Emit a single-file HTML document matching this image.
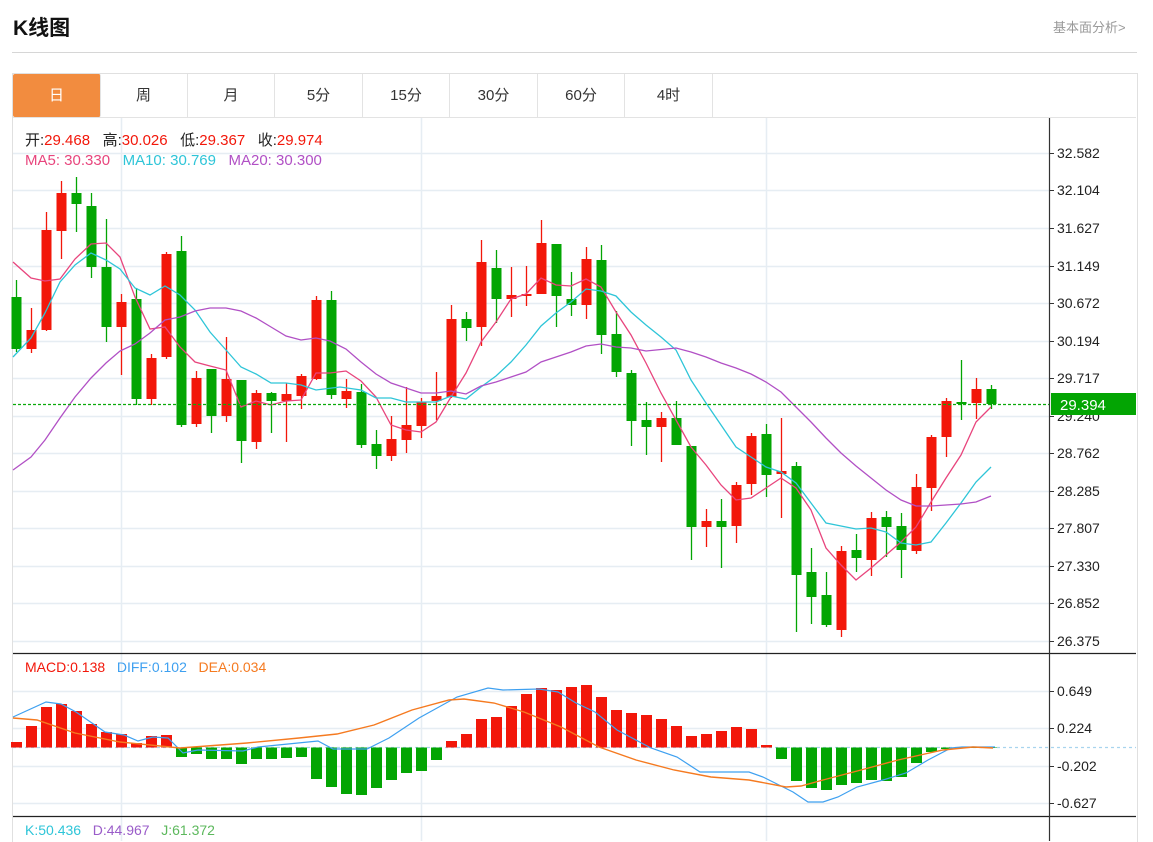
<!DOCTYPE html>
<html><head><meta charset="utf-8">
<style>
html,body{margin:0;padding:0;background:#fff;width:1153px;height:841px;overflow:hidden;font-family:"Liberation Sans","Noto Sans CJK SC",sans-serif;}
.t{position:absolute;white-space:nowrap;}
.tab{position:absolute;top:74px;height:43px;line-height:43px;text-align:center;font-size:15px;color:#333;border-right:1px solid #e3e3e3;}
</style></head><body>
<div class="t" style="left:13px;top:12px;font-size:21px;font-weight:bold;color:#111;">K线图</div>
<div class="t" style="left:1053px;top:17px;font-size:13px;color:#999;">基本面分析&gt;</div>
<div style="position:absolute;left:12px;top:52px;width:1125px;height:1px;background:#d6d6d6"></div>
<div style="position:absolute;left:12px;top:73px;width:1124px;height:768px;border:1px solid #e0e0e0;border-bottom:none"></div>
<div style="position:absolute;left:13px;top:117px;width:1123px;height:1px;background:#e3e3e3"></div>
<div class="tab" style="left:13px;width:87px;background:#f28c3f;color:#fff;border-radius:2px;">日</div>
<div class="tab" style="left:100px;width:87px;">周</div>
<div class="tab" style="left:188px;width:86px;">月</div>
<div class="tab" style="left:275px;width:87px;">5分</div>
<div class="tab" style="left:363px;width:86px;">15分</div>
<div class="tab" style="left:450px;width:87px;">30分</div>
<div class="tab" style="left:538px;width:86px;">60分</div>
<div class="tab" style="left:625px;width:87px;">4时</div>
<svg id="c" width="1153" height="841" style="position:absolute;left:0;top:0" xmlns="http://www.w3.org/2000/svg"></svg>
<div class="t" style="left:25px;top:129px;font-size:15px;color:#222;">开:<span style="color:#f2170a">29.468</span>&nbsp;&nbsp; 高:<span style="color:#f2170a">30.026</span>&nbsp;&nbsp; 低:<span style="color:#f2170a">29.367</span>&nbsp;&nbsp; 收:<span style="color:#f2170a">29.974</span></div>
<div class="t" style="left:25px;top:152px;font-size:15px;"><span style="color:#e8457d">MA5: 30.330</span>&nbsp;&nbsp; <span style="color:#2ec5d8">MA10: 30.769</span>&nbsp;&nbsp; <span style="color:#b150c5">MA20: 30.300</span></div>
<div class="t" style="left:25px;top:659px;font-size:14px;"><span style="color:#f2170a">MACD:0.138</span>&nbsp;&nbsp; <span style="color:#3ea0f0">DIFF:0.102</span>&nbsp;&nbsp; <span style="color:#f57a20">DEA:0.034</span></div>
<div class="t" style="left:25px;top:822px;font-size:14px;"><span style="color:#2ec5d8">K:50.436</span>&nbsp;&nbsp; <span style="color:#9a5cc9">D:44.967</span>&nbsp;&nbsp; <span style="color:#5cb85c">J:61.372</span></div>
<script>
var s='';
function L(x1,y1,x2,y2,c,w,extra){s+='<line x1="'+x1+'" y1="'+y1+'" x2="'+x2+'" y2="'+y2+'" stroke="'+c+'" stroke-width="'+(w||1)+'" '+(extra||'')+'/>';}
var G='#e6edf3';
[121.5,421.5,766.5].forEach(function(x){L(x,118,x,841,G,1.5);});
var labs=[[153,'32.582'],[190,'32.104'],[228,'31.627'],[266,'31.149'],[303,'30.672'],[341,'30.194'],[378,'29.717'],[416,'29.240'],[453,'28.762'],[491,'28.285'],[528,'27.807'],[566,'27.330'],[603,'26.852'],[641,'26.375']];
labs.forEach(function(a){L(13,a[0]+.5,1049,a[0]+.5,G,1.5);L(1049,a[0]+.5,1054,a[0]+.5,'#333');s+='<text x="1057" y="'+(a[0]+5)+'" font-size="14" fill="#222" font-family="Liberation Sans">'+a[1]+'</text>';});
var ml=[[691,'0.649'],[728,'0.224'],[766,'-0.202'],[803,'-0.627']];
ml.forEach(function(a){L(13,a[0]+.5,1049,a[0]+.5,G,1.5);L(1049,a[0]+.5,1054,a[0]+.5,'#333');s+='<text x="1057" y="'+(a[0]+5)+'" font-size="14" fill="#222" font-family="Liberation Sans">'+a[1]+'</text>';});
L(13,653.5,1136,653.5,'#222',1.2);L(13,816.5,1136,816.5,'#222',1.2);
L(1049.5,118,1049.5,841,'#333',1.2);
var R='#f2170a',Gr='#03a503';
var C=[['G',297,349,280,352],['R',330,349,308,353],['R',230,330,212,331],['R',193,231,181,259],['G',193,204,177,232],['G',206,267,193,278],['G',267,327,219,342],['R',302,327,294,375],['G',299,399,288,405],['R',358,399,354,405],['R',254,357,252,359],['G',251,425,236,427],['R',378,424,371,427],['G',369,416,369,433],['R',379,416,337,422],['G',380,441,380,463],['R',393,442,390,449],['G',393,401,392,433],['R',394,401,383,442],['R',376,396,374,409],['R',300,379,296,380],['G',300,395,291,399],['R',391,399,379,408],['G',392,445,384,448],['G',444,456,430,469],['R',439,456,416,461],['R',425,440,387,453],['R',402,426,398,438],['R',396,401,372,420],['R',319,397,305,398],['G',319,328,312,341],['R',262,327,240,346],['G',268,299,250,323],['R',295,299,267,317],['R',294,296,266,306],['R',243,294,220,294],['G',244,296,244,327],['G',299,305,272,316],['R',259,305,247,319],['G',260,335,245,354],['G',334,372,311,377],['G',373,421,370,446],['G',420,427,402,455],['R',418,427,412,462],['G',418,445,401,445],['G',446,527,446,560],['R',521,527,509,547],['G',521,527,499,568],['R',485,526,482,543],['R',436,484,433,495],['G',434,475,424,497],['R',471,474,418,518],['G',466,575,462,632],['G',572,597,548,624],['G',595,625,572,627],['R',551,630,546,637],['G',550,558,534,572],['R',518,560,512,576],['G',517,527,511,557],['G',526,550,513,578],['R',487,551,474,554],['R',437,488,435,511],['R',401,437,398,457],['G',402,404,360,420],['R',389,403,378,419],['G',389,404,385,409]];
C.forEach(function(c,i){var x=16.5+15*i,col=c[0]=='R'?R:Gr;L(x,c[3],x,c[4],col,1.3);var h=Math.max(2,c[2]-c[1]);s+='<rect x="'+(x-5)+'" y="'+c[1]+'" width="10" height="'+h+'" fill="'+col+'"/>';});
function P(pts,c,w){s+='<polyline fill="none" stroke="'+c+'" stroke-width="'+(w||1.3)+'" points="'+pts+'"/>';}
P('13,262 31,278 45,281 60,279 75,259 91,244 106,243 120,257 135,297 150,329 165,327 180,347 195,362 210,366 226,370 241,407 256,401 271,405 286,401 301,400 316,373 330,373 346,371 361,381 376,397 391,425 406,430 421,432 436,422 451,397 466,373 481,342 496,322 511,299 526,294 541,278 556,285 571,286 586,279 601,287 616,312 631,335 646,363 661,393 676,420 691,447 706,465 721,485 736,500 751,498 766,488 781,478 796,488 811,510 826,548 841,565 856,580 871,568 886,555 901,542 916,527 931,502 946,478 961,455 976,422 991,407','#e8457d');
P('13,357 31,338 45,313 60,282 75,265 91,253 106,260 120,269 135,288 150,295 165,286 180,295 195,310 210,332 226,350 241,367 256,374 271,383 286,383 301,385 316,390 340,387 361,390 376,398 391,398 406,402 421,402 436,402 451,396 466,399 481,387 496,376 511,362 526,345 541,326 556,313 571,302 586,289 601,291 616,296 631,312 646,325 661,337 676,350 691,380 706,403 721,425 736,447 751,457 766,467 781,472 796,483 811,503 826,523 841,526 856,529 871,528 886,532 901,543 916,545 931,542 946,523 961,503 976,482 991,467','#2ec5d8');
P('13,470 31,457 45,440 60,418 75,397 91,378 106,363 120,351 135,344 150,333 165,320 180,317 195,311 210,308 226,308 241,311 256,318 271,327 286,336 301,340 316,338 330,341 346,349 361,362 376,374 391,383 406,388 421,393 436,393 451,391 466,394 481,386 496,382 511,377 526,372 541,362 556,357 571,352 586,346 601,344 616,347 631,348 646,351 676,348 691,352 706,357 721,363 736,368 751,374 766,382 781,392 796,407 811,422 826,438 841,453 856,466 871,478 886,490 901,500 916,506 931,506 946,505 961,504 976,502 991,496','#b150c5');
L(13,404.5,1049,404.5,'#0aaa0a',1.2,'stroke-dasharray="3,2"');
s+='<rect x="1051" y="393" width="85" height="22" fill="#03a503"/><text x="1060" y="410" font-size="15" fill="#fff" font-family="Liberation Sans">29.394</text>';
var Z=747.5;
L(13,Z,1136,Z,'#a8d4ee',1.2,'stroke-dasharray="3,3"');
var M=[742,726,707,704,711,724,732,734,743,736,735,757,754,759,759,764,759,759,758,757,779,787,794,795,788,780,773,771,760,741,734,719,717,706,694,688,690,687,685,697,710,713,715,719,726,736,734,731,727,729,745,759,781,788,790,785,783,780,781,777,763,752,749,748,748,748];
M.forEach(function(v,i){var x=16.5+15*i;if(v<Z)s+='<rect x="'+(x-5.5)+'" y="'+v+'" width="11" height="'+(Z-v)+'" fill="'+R+'"/>';else s+='<rect x="'+(x-5.5)+'" y="'+Z+'" width="11" height="'+(v-Z)+'" fill="'+Gr+'"/>';});
P('13,717 46,702 61,704 76,712 105,732 124,735 138,741 153,737 168,738 183,753 198,750 243,751 258,747 288,744 318,741 333,749 367,749 389,738 419,718 457,697 488,688 503,690 539,689 558,692 576,703 595,712 617,730 651,748 677,757 700,772 749,772 763,777 793,792 808,802 823,802 838,797 857,787 883,780 906,773 928,760 951,748 962,747 995,747','#3ea0f0',1.2);
P('13,718 37,720 75,733 120,742 180,748 247,743 299,738 337,734 374,725 412,710 449,700 464,699 494,703 524,712 561,727 599,747 636,760 674,770 711,777 749,780 786,787 801,786 823,780 861,770 898,760 943,750 973,747 993,748','#f57a20',1.4);
document.getElementById('c').innerHTML=s;
</script>
</body></html>
